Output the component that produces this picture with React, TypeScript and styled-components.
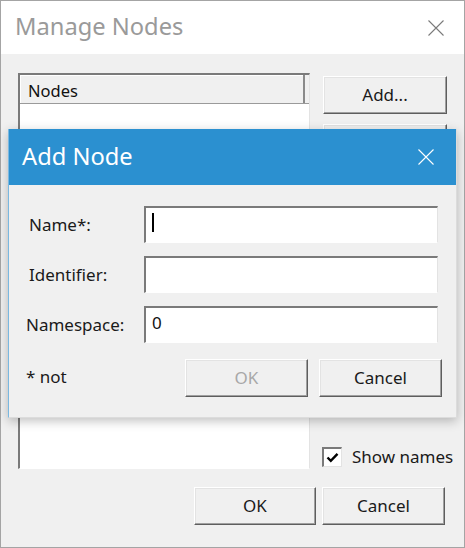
import styled, { createGlobalStyle } from 'styled-components';

const GlobalStyle = createGlobalStyle`
  html, body {
    margin: 0;
    padding: 0;
    background: #ffffff;
  }
  body {
    font-family: "Noto Sans", "DejaVu Sans", sans-serif;
  }
  * {
    box-sizing: border-box;
  }
`

const WindowFrame = styled.div`
  position: relative;
  width: 465px;
  height: 548px;
  border: 1px solid #a4a4a4;
  display: flex;
  flex-direction: column;
  background: #f0f0f0;
`

const TitleBar = styled.div<{ $active?: boolean }>`
  height: ${p => (p.$active ? '56px' : '53px')};
  flex-shrink: 0;
  display: flex;
  align-items: center;
  justify-content: space-between;
  padding: ${p => (p.$active ? '0 22px 0 13px' : '0 20px 0 14px')};
  background: ${p => (p.$active ? '#2b90d0' : '#ffffff')};
  color: ${p => (p.$active ? '#ffffff' : '#9a9a9a')};
  font-size: 23.7px;
`

const TitleText = styled.span`
  line-height: 1;
  padding-bottom: 1px;
`

const CloseIcon = ({ color }: { color: string }) => (
  <svg width="16" height="16" viewBox="0 0 16 16">
    <path d="M0.5 0.5 L15.5 15.5 M15.5 0.5 L0.5 15.5" stroke={color} strokeWidth="1.1" fill="none" />
  </svg>
)

const WindowBody = styled.div`
  flex: 1;
  display: flex;
  flex-direction: column;
  padding: 19px 17px 20px 17px;
`

const MainRow = styled.div`
  display: flex;
  gap: 13px;
  height: 396px;
`

const ListView = styled.div`
  width: 292px;
  height: 100%;
  background: #ffffff;
  border-style: solid;
  border-width: 2px 1px 1px 2px;
  border-color: #7a7a7a #e3e3e3 #ffffff #7a7a7a;
  display: flex;
  flex-direction: column;
`

const ListHeader = styled.div`
  height: 29px;
  display: flex;
  background: #f0f0f0;
  border-bottom: 1px solid #9a9a9a;
`

const HeaderCell = styled.div`
  width: 285px;
  height: 100%;
  display: flex;
  align-items: center;
  padding: 2px 0 0 8px;
  font-size: 16.5px;
  color: #111;
  border-right: 2px solid #8a8a8a;
  box-shadow: inset 1px 1px 0 #ffffff;
`

const RightColumn = styled.div`
  flex: 1;
  min-width: 0;
  display: flex;
  flex-direction: column;
  padding-top: 3px;
`

const Button = styled.div<{ $disabled?: boolean; $width?: number }>`
  width: ${p => p.$width ?? 123}px;
  height: 38px;
  flex-shrink: 0;
  display: flex;
  align-items: center;
  justify-content: center;
  font-size: 17px;
  color: ${p => (p.$disabled ? '#a8a8a8' : '#1a1a1a')};
  background: #f0f0f0;
  border-style: solid;
  border-width: 1px;
  border-color: #ffffff #5e5e5e #5e5e5e #ffffff;
  box-shadow: inset -1px -1px 0 #a0a0a0, inset 1px 1px 0 #e3e3e3;
  padding-bottom: 1px;
`

const ButtonStack = styled.div`
  display: flex;
  flex-direction: column;
  gap: 10px;
`

const Spacer = styled.div`
  flex: 1;
`

const CheckRow = styled.div`
  display: flex;
  align-items: center;
  gap: 10px;
  margin: 0 0 1px -1px;
  font-size: 17px;
  color: #1a1a1a;
  white-space: nowrap;
`

const CheckBox = styled.div`
  width: 20px;
  height: 20px;
  flex-shrink: 0;
  background: #ffffff;
  border-style: solid;
  border-width: 2px 1px 1px 2px;
  border-color: #7a7a7a #e3e3e3 #e3e3e3 #7a7a7a;
  display: flex;
  align-items: center;
  justify-content: center;
`

const Footer = styled.div`
  display: flex;
  justify-content: flex-end;
  gap: 6px;
  margin-top: 18px;
  padding-right: 2px;
`

const Dialog = styled.div`
  position: absolute;
  left: 7px;
  top: 128px;
  width: 449px;
  height: 289px;
  display: flex;
  flex-direction: column;
  background: #f0f0f0;
  border-left: 1px solid #7ab8e0;
  border-right: 1px solid #dcdcdc;
  border-bottom: 1px solid #dcdcdc;
  box-shadow: 0 3px 10px rgba(0, 0, 0, 0.25);
`

const DialogBody = styled.div`
  flex: 1;
  padding: 21px 14px 0 17px;
  display: flex;
  flex-direction: column;
`

const FormGrid = styled.div`
  display: grid;
  grid-template-columns: 118px 294px;
  row-gap: 13px;
`

const FieldLabel = styled.div<{ $indent?: number }>`
  display: flex;
  align-items: center;
  padding-left: ${p => p.$indent ?? 0}px;
  font-size: 17px;
  color: #1a1a1a;
`

const TextBox = styled.div`
  height: 37px;
  background: #ffffff;
  border-style: solid;
  border-width: 2px 1px 1px 2px;
  border-color: #7a7a7a #e3e3e3 #ffffff #7a7a7a;
  display: flex;
  align-items: flex-start;
  padding: 3px 0 0 6px;
  font-size: 17px;
  color: #111;
`

const Caret = styled.span`
  width: 2px;
  height: 19px;
  margin-top: 2px;
  background: #000;
`

const ActionRow = styled.div`
  display: flex;
  align-items: center;
  margin-top: 16px;
`

const Note = styled.div`
  flex: 1;
  font-size: 17px;
  color: #1a1a1a;
  margin-top: -4px;
`

const ActionButtons = styled.div`
  display: flex;
  gap: 11px;
`

const App = () => {
  return (
    <>
      <GlobalStyle />
      <WindowFrame>
        <TitleBar>
          <TitleText>Manage Nodes</TitleText>
          <CloseIcon color="#7a7a7a" />
        </TitleBar>
        <WindowBody>
          <MainRow>
            <ListView>
              <ListHeader>
                <HeaderCell>Nodes</HeaderCell>
              </ListHeader>
            </ListView>
            <RightColumn>
              <ButtonStack>
                <Button $width={124}>Add...</Button>
                <Button $width={124}>Edit...</Button>
              </ButtonStack>
              <Spacer />
              <CheckRow>
                <CheckBox>
                  <svg width="13" height="11" viewBox="0 0 13 11">
                    <path d="M1.5 5.5 L4.8 8.8 L11.5 1.8" stroke="#000" strokeWidth="2.4" fill="none" />
                  </svg>
                </CheckBox>
                Show names
              </CheckRow>
            </RightColumn>
          </MainRow>
          <Footer>
            <Button $width={122}>OK</Button>
            <Button $width={123}>Cancel</Button>
          </Footer>
        </WindowBody>

        <Dialog>
          <TitleBar $active>
            <TitleText>Add Node</TitleText>
            <CloseIcon color="#ffffff" />
          </TitleBar>
          <DialogBody>
            <FormGrid>
              <FieldLabel $indent={3}>Name*:</FieldLabel>
              <TextBox>
                <Caret />
              </TextBox>
              <FieldLabel $indent={3}>Identifier:</FieldLabel>
              <TextBox />
              <FieldLabel>Namespace:</FieldLabel>
              <TextBox>0</TextBox>
            </FormGrid>
            <ActionRow>
              <Note>* not</Note>
              <ActionButtons>
                <Button $disabled>OK</Button>
                <Button>Cancel</Button>
              </ActionButtons>
            </ActionRow>
          </DialogBody>
        </Dialog>
      </WindowFrame>
    </>
  )
}

export default App;
